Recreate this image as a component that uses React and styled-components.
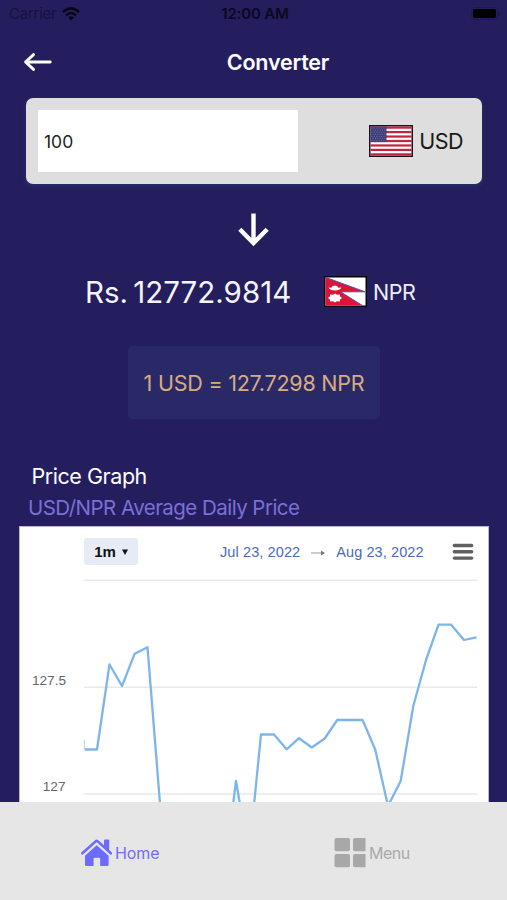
import styled, { createGlobalStyle } from "styled-components";

const GlobalStyle = createGlobalStyle`
*{box-sizing:border-box;}
body{
  margin:0;
  background-color:#241e5f;
}
`;

const Container = styled.div`
width:507px;
height:900px;
display:flex;
flex-direction:column;
overflow:hidden;
background-color:#241e5f;
color:#fff;
font-family:Inter, "Liberation Sans", sans-serif;
`;

const StatusBar = styled.div`
height:28px;
flex:none;
display:grid;
grid-template-columns:1fr auto 1fr;
align-items:center;
padding:0 6px 0 9px;
font-size:15px;
line-height:28px;
color:#0b0820;
`;

const Carrier = styled.div`
display:flex;
align-items:center;
gap:6px;
letter-spacing:-0.25px;
color:#16123a;
`;

const Time = styled.div`
font-weight:600;
letter-spacing:-0.15px;
`;

const Battery = styled.svg`
justify-self:end;
`;

const Header = styled.header`
height:70px;
flex:none;
display:grid;
grid-template-columns:100px 1fr;
align-items:center;
padding:0 51px 2px 23px;
`;

const Title = styled.h1`
margin:0 0 0 -23px;
text-align:center;
font-size:21.5px;
font-weight:600;
letter-spacing:-0.2px;
`;

const InputCard = styled.div`
height:86px;
flex:none;
margin:0 25px 0 26px;
padding:0 19px 0 12px;
display:flex;
align-items:center;
justify-content:space-between;
border-radius:7px;
background-color:#dedede;
box-shadow:0 2px 5px rgba(42,52,105,0.8);
`;

const Amount = styled.input`
width:260px;
height:62px;
padding:0 6px;
border:none;
outline:none;
background-color:#fff;
color:#222;
font-family:inherit;
font-size:17.5px;
letter-spacing:0;
`;

const Currency = styled.div`
display:flex;
align-items:center;
gap:6px;
font-size:21.5px;
letter-spacing:-0.5px;
color:${(props) => props.$color};
`;

const ArrowRow = styled.div`
height:92px;
flex:none;
display:flex;
align-items:center;
justify-content:center;
`;

const Result = styled.div`
height:31px;
flex:none;
display:flex;
align-items:center;
gap:32px;
padding-left:85px;
`;

const ResultValue = styled.div`
width:207px;
white-space:nowrap;
font-size:29.5px;
word-spacing:-3px;
letter-spacing:0;
color:#f5f5ff;
`;

const Rate = styled.div`
width:252px;
height:73px;
flex:none;
margin:39px 0 0 128px;
display:flex;
align-items:center;
justify-content:center;
border-radius:5px;
background-color:#292968;
color:#d9ac80;
font-size:21.5px;
letter-spacing:-0.23px;
white-space:nowrap;
`;

const GraphTitle = styled.h2`
margin:41px 0 0 31.5px;
font-size:21.5px;
font-weight:400;
line-height:32px;
letter-spacing:-0.45px;
`;

const GraphSubtitle = styled.div`
height:34px;
flex:none;
padding-left:28px;
font-size:20.5px;
line-height:32px;
letter-spacing:-0.54px;
color:#7a70d6;
`;

const ChartCard = styled.section`
flex:1;
min-height:0;
margin:0 18px 0 19px;
overflow:hidden;
background-color:#fff;
border:1px solid #b9b6dc;
border-bottom:none;
font-family:"Liberation Sans", Arial, sans-serif;
`;

const ChartTools = styled.div`
height:50px;
display:flex;
align-items:center;
padding:0 14px 0 64px;
color:#4a6cb8;
font-size:14.5px;
`;

const Range = styled.button`
width:54px;
height:27px;
margin:0 82px 1px 0;
padding:0;
display:flex;
align-items:center;
justify-content:center;
gap:6px;
border:none;
border-radius:3px;
background-color:#e6ebf5;
color:#111;
font-family:inherit;
font-size:15px;
font-weight:700;
`;

const DateText = styled.span`
white-space:nowrap;
letter-spacing:${(props) => props.$spacing}px;
`;

const DateArrow = styled.svg`
margin:2px 11px 0 11px;
`;

const MenuIcon = styled.svg`
margin-left:auto;
`;

const Plot = styled.svg`
display:block;
font-size:13.6px;
`;

const TabBar = styled.nav`
height:98px;
flex:none;
display:grid;
grid-template-columns:253px 1fr;
background-color:#e6e6e6;
`;

const Tab = styled.div`
display:flex;
align-items:center;
gap:3px;
padding:4px 0 0 81px;
font-size:16px;
letter-spacing:${(props) => props.$spacing}px;
color:${(props) => props.$color};
`;

const rates = [
  [84.5, 749.5], [97, 749.5], [109.5, 664.5], [122, 686], [134.7, 653.7],
  [147.5, 647.3], [160.2, 806], [172.8, 860], [185.5, 860], [198.2, 870],
  [210.8, 870], [223.6, 879], [236, 781], [248.9, 856], [261, 734.5],
  [274, 734.5], [286.6, 749.3], [299, 738.2], [311.8, 747.5], [324.7, 738.5],
  [337.2, 720], [362.6, 720], [375.2, 749.5], [388, 806], [400.7, 781],
  [413.3, 706], [426, 660], [438.5, 624.7], [451.2, 624.7], [464, 640],
  [476.5, 637.3],
];

const UsFlag = () => (
  <svg width="44" height="32" viewBox="0 0 44 32">
    <rect width="44" height="32" fill="#17131f" />
    <rect x="1.5" y="1.5" width="41" height="29" fill="#fff" />
    {[0, 1, 2, 3, 4, 5, 6].map((n) => (
      <rect key={n} x="1.5" y={1.5 + n * 4.46} width="41" height="2.23" fill="#c2263f" />
    ))}
    <rect x="1.5" y="1.5" width="16" height="15.6" fill="#3f3f78" />
    {[0, 1, 2, 3, 4, 5, 6].map((n) => (
      <line key={n} x1={n % 2 ? 3.5 : 2.5} x2="17" y1={3 + n * 2.1} y2={3 + n * 2.1}
        stroke="#8583ad" strokeWidth="0.8" strokeDasharray="0.9 1.5" />
    ))}
  </svg>
);

const NepalFlag = () => (
  <svg width="43" height="31" viewBox="0 0 43 31">
    <rect width="43" height="31" fill="#08060f" />
    <rect x="1.5" y="1.5" width="40" height="28" fill="#fff" />
    <path d="M1.5 1.5 41 15.8H16.5L38 29.5H1.5Z" fill="#dc143c" />
    <path d="M2 1.5 41 15.8H16.5L38.5 29.5" fill="none" stroke="#4b559c" strokeWidth="1" />
    <path d="M4.5 11.5 7.5 11.8 8 10.3 10.8 9.6 13.5 10.3 14 11.8 17.5 11.5 Q16 14.4 11 14.4 Q6 14.4 4.5 11.5Z" fill="#fff" />
    <path d="m11 17.5 2 1.3 2.8-.2.3 1.9 2 1.5-2 1.6-.3 1.8-2.8-.1-2 1.2-2-1.2-2.8.1-.3-1.8-2-1.6 2-1.5.3-1.9 2.8.2Z" fill="#fff" />
  </svg>
);

const App = () => {
  return (
    <>
      <GlobalStyle />
      <Container>
        <StatusBar>
          <Carrier>
            Carrier
            <svg width="18" height="14" viewBox="0 0 18 14" fill="none" stroke="#080618" strokeWidth="2.5">
              <path d="M1 5.2Q9-2.4 17 5.2" />
              <path d="M4 8.4Q9 3.6 14 8.4" />
              <path d="M6.2 10.5Q9 8.2 11.8 10.5L9 13.4Z" fill="#080618" stroke="none" />
            </svg>
          </Carrier>
          <Time>12:00 AM</Time>
          <Battery width="30" height="14" viewBox="0 0 30 14">
            <rect x="0.5" y="0.5" width="26" height="12" rx="3.5" fill="none" stroke="#1e1851" />
            <rect x="2" y="2" width="23" height="9" rx="2" fill="#000" />
            <path d="M28 5v3.5" stroke="#1b1649" strokeWidth="1.5" />
          </Battery>
        </StatusBar>

        <Header>
          <svg width="30" height="20" viewBox="0 0 30 20" fill="none" stroke="#fff" strokeWidth="2.9" strokeLinecap="round" strokeLinejoin="round">
            <path d="M27.2 10H2.6M10.5 2.6 2.6 10l7.9 7.4" />
          </svg>
          <Title>Converter</Title>
        </Header>

        <InputCard>
          <Amount defaultValue="100" />
          <Currency $color="#181818">
            <UsFlag />
            USD
          </Currency>
        </InputCard>

        <ArrowRow>
          <svg width="34" height="36" viewBox="0 0 34 36" fill="none" stroke="#fff" strokeWidth="4.4">
            <path d="M16.5 1.5v29M2.8 17.2l13.7 14 13.7-14" />
          </svg>
        </ArrowRow>

        <Result>
          <ResultValue>Rs. 12772.9814</ResultValue>
          <Currency $color="#ececfa">
            <NepalFlag />
            NPR
          </Currency>
        </Result>

        <Rate>1 USD = 127.7298 NPR</Rate>

        <GraphTitle>Price Graph</GraphTitle>
        <GraphSubtitle>USD/NPR Average Daily Price</GraphSubtitle>

        <ChartCard>
          <ChartTools>
            <Range>
              1m
              <svg width="6" height="6" viewBox="0 0 6 6">
                <path d="M0 .5h6L3 6Z" fill="#111" />
              </svg>
            </Range>
            <DateText $spacing={0.1}>Jul 23, 2022</DateText>
            <DateArrow width="14" height="6" viewBox="0 0 14 6">
              <path d="M0 3h11" stroke="#999" />
              <path d="M10 .5 14 3l-4 2.5Z" fill="#777" />
            </DateArrow>
            <DateText $spacing={0.1}>Aug 23, 2022</DateText>
            <MenuIcon width="22" height="18" viewBox="0 0 22 18" stroke="#606060" strokeWidth="3.4" strokeLinecap="round">
              <path d="M2.3 2.5h17.4M2.3 8.8h17.4M2.3 15.1h17.4" />
            </MenuIcon>
          </ChartTools>
          <Plot width="468" height="225" viewBox="20 577 468 225">
            <g stroke="#e9e9e9" strokeWidth="1.5">
              <path d="M84 580.3h393M84 687.3h393M84 794h393" />
            </g>
            <g fill="#666" textAnchor="end">
              <text x="66" y="685">127.5</text>
              <text x="65.5" y="791">127</text>
            </g>
            <path d="M84.3 740v9" stroke="#b5d3f0" />
            <polyline points={rates.join(" ")} fill="none" stroke="#7cb5ec" strokeWidth="2.3" strokeLinejoin="round" />
          </Plot>
        </ChartCard>

        <TabBar>
          <Tab $spacing={-0.1} $color="#736bf5">
            <svg width="31" height="28" viewBox="0 0 31 28" fill="#6c6aff">
              <path d="M23 1.5q0-1 1-1h3.2q1 0 1 1V12L23 7.4Z" />
              <path d="M1.4 14.3 14.6 2.4q1.1-.9 2.2 0L29.8 14.3" fill="none" stroke="#6c6aff" strokeWidth="2.6" strokeLinecap="round" />
              <path d="M15.7 6.2 27.6 16.8v9q0 1.2-1.2 1.2h-7.2v-7.2q0-1-1-1h-4.6q-1 0-1 1V27H5.2Q4 27 4 25.8v-9Z" />
            </svg>
            Home
          </Tab>
          <Tab $spacing={-0.5} $color="#aaa">
            <svg width="32" height="30" viewBox="0 0 32 30" fill="#a8a8a8">
              <rect x="0.5" y="0" width="15.5" height="13.3" rx="2" />
              <path d="M21 0h10.5v13.3H21q-2 0-2-2V2q0-2 2-2Z" />
              <rect x="0.5" y="16" width="15.5" height="13.3" rx="2" />
              <path d="M21 16h10.5v13.3H21q-2 0-2-2V18q0-2 2-2Z" />
            </svg>
            Menu
          </Tab>
        </TabBar>
      </Container>
    </>
  );
};

export default App;
